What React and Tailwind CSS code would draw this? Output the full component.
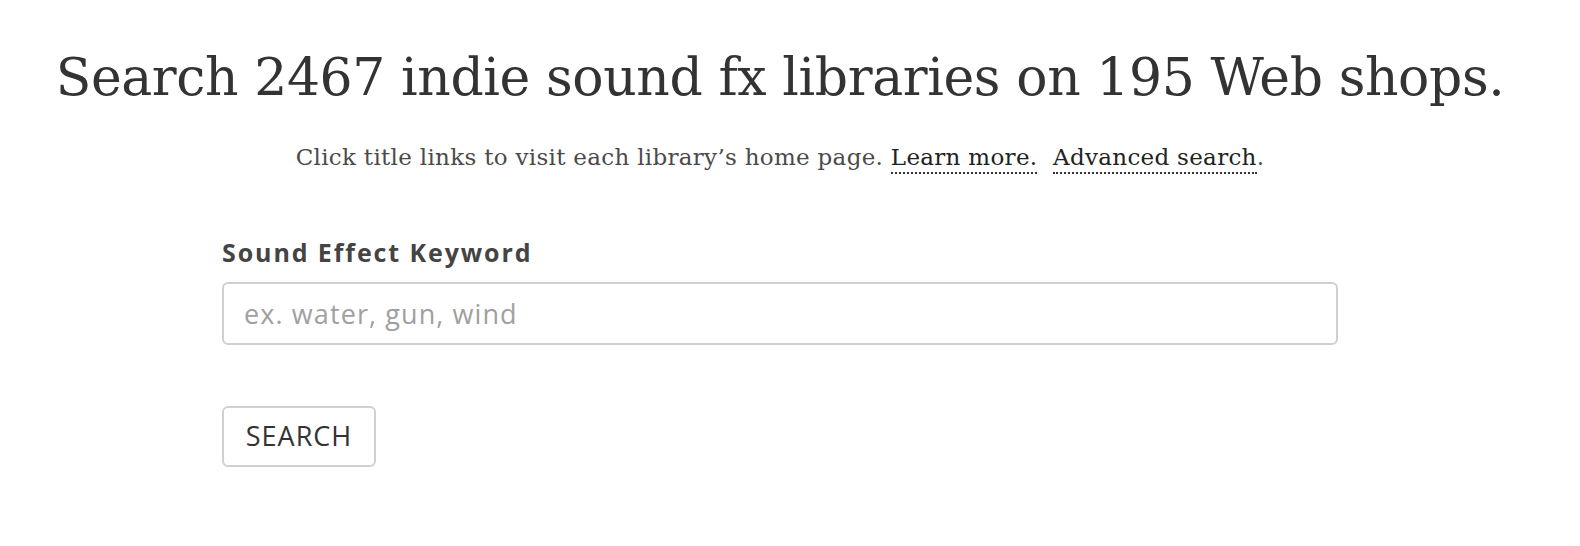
import React from 'react';

const App = () => {
  return (
    <div className="w-[1560px] bg-white min-h-[546px] text-[#333]">
      {/* Heading */}
      <div className="pt-[41px] text-center">
        <h1 className="font-['DejaVu_Serif',serif] text-[52px] leading-[72px] tracking-[-0.4px] text-[#333]">
          Search 2467 indie sound fx libraries on 195 Web shops.
        </h1>
        <p className="mt-[28px] font-['DejaVu_Serif',serif] font-light text-[23px] leading-[32px] tracking-[0.3px] text-[#4a4a4a]">
          Click title links to visit each library’s home page.{' '}
          <a href="#" className="text-[#222] border-b-2 border-dotted border-[#333] pb-[2px]">
            Learn more.
          </a>{' '}
          <a href="#" className="ml-[8px] text-[#222] border-b-2 border-dotted border-[#333] pb-[2px]">
            Advanced search
          </a>
          .
        </p>
      </div>

      {/* Form */}
      <form className="mx-auto mt-[63px] w-[1116px] font-['Open_Sans',sans-serif]">
        <label className="block text-[25px] leading-[32px] font-bold tracking-[1.9px] text-[#444]">
          Sound Effect Keyword
        </label>
        <input
          type="text"
          placeholder="ex. water, gun, wind"
          className="mt-[14px] block w-full h-[63px] rounded-[6px] border-2 border-[#d0d0d0] px-[20px] text-[27px] tracking-[1.1px] text-[#333] placeholder:text-[#a0a0a0] outline-none"
        />
        <button
          type="button"
          className="mt-[61px] block h-[61px] w-[154px] rounded-[6px] border-2 border-[#d0d0d0] bg-white text-[27px] tracking-[1px] text-[#333]"
        >
          SEARCH
        </button>
      </form>
    </div>
  );
};

export default App;
